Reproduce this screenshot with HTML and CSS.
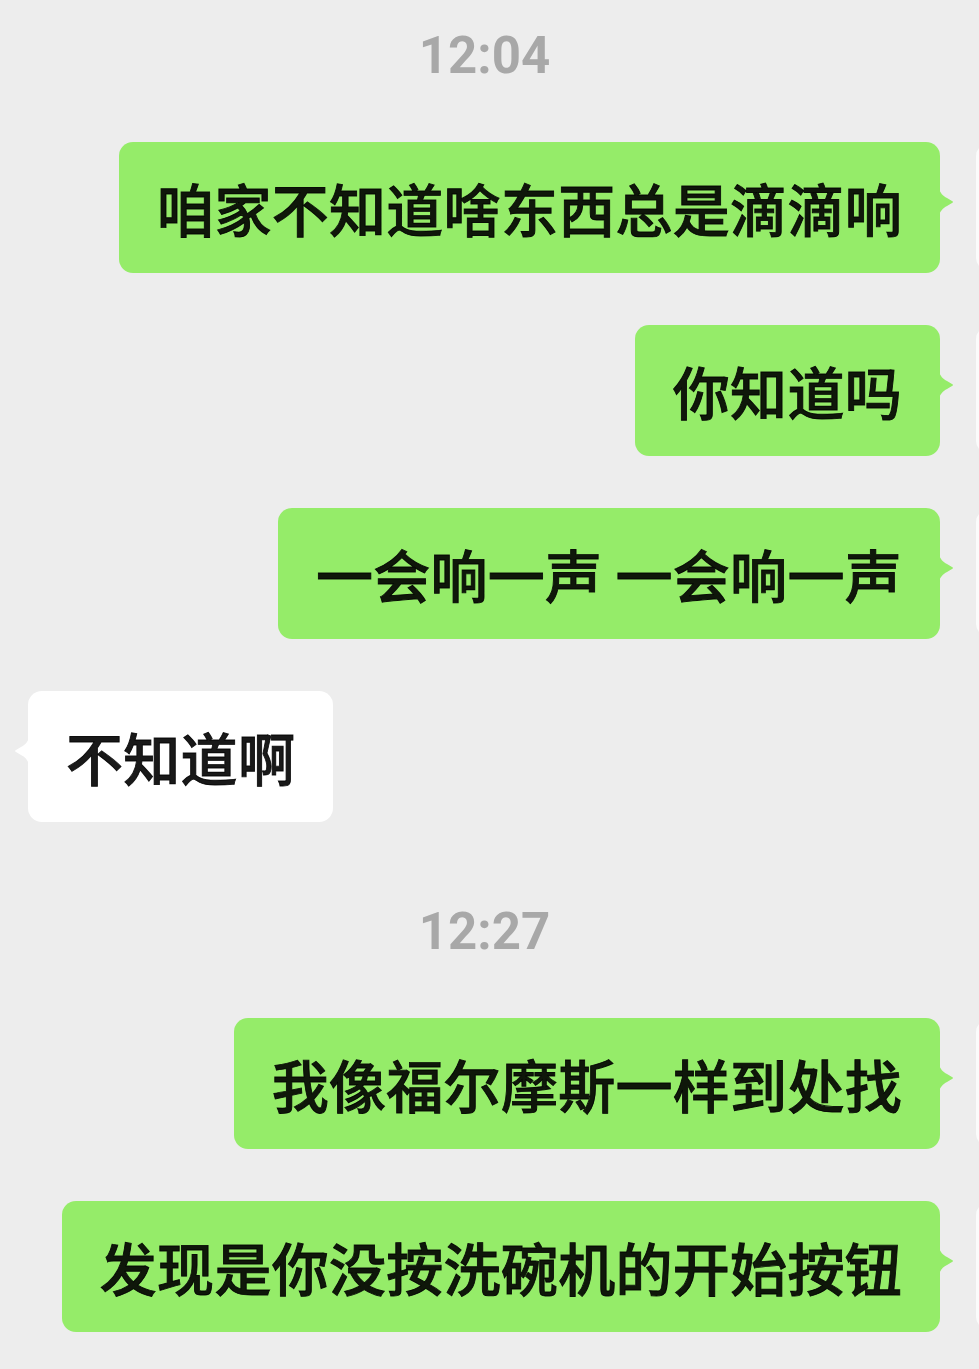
FILE: index.html
```html
<!DOCTYPE html>
<html lang="zh-CN">
<head>
<meta charset="utf-8">
<title>Chat</title>
<link rel="stylesheet" href="styles.css">
</head>
<body>
<main class="chat">
  <div class="time">12:04</div>

  <div class="row row-out">
    <div class="bubble bubble-out">咱家不知道啥东西总是滴滴响</div>
    <div class="avatar"></div>
  </div>

  <div class="row row-out">
    <div class="bubble bubble-out">你知道吗</div>
    <div class="avatar"></div>
  </div>

  <div class="row row-out">
    <div class="bubble bubble-out">一会响一声 一会响一声</div>
    <div class="avatar"></div>
  </div>

  <div class="row row-in">
    <div class="avatar"></div>
    <div class="bubble bubble-in">不知道啊</div>
  </div>

  <div class="time time-later">12:27</div>

  <div class="row row-out">
    <div class="bubble bubble-out">我像福尔摩斯一样到处找</div>
    <div class="avatar"></div>
  </div>

  <div class="row row-out">
    <div class="bubble bubble-out">发现是你没按洗碗机的开始按钮</div>
    <div class="avatar"></div>
  </div>
</main>
</body>
</html>
```

FILE: styles.css
```css
html, body {
  margin: 0;
  padding: 0;
  background: #ededed;
}

body {
  width: 979px;
  height: 1369px;
  overflow: hidden;
}

.chat {
  display: flex;
  flex-direction: column;
  gap: 52px;
  padding-top: 26px;
  overflow: hidden;
}

.time {
  font-family: Roboto, "Liberation Sans", sans-serif;
  font-weight: 700;
  font-size: 51px;
  line-height: 60px;
  color: #a8a8a8;
  text-align: center;
  padding-right: 10px;
  margin-bottom: 4px;
}

.time-later {
  margin-top: 28px;
}

.row {
  display: flex;
  align-items: flex-start;
  gap: 36px;
}

.row-out {
  justify-content: flex-end;
  padding-right: 39px;
}

.row-out .avatar {
  margin-right: -166px;
}

.row-in {
  justify-content: flex-start;
}

.row-in .avatar {
  margin-left: -138px;
}

.avatar {
  flex-shrink: 0;
  width: 130px;
  height: 126px;
  margin-top: 2px;
  border-radius: 12px;
  background: #fbfbfb;
}

.bubble {
  position: relative;
  font-family: "Noto Sans CJK SC", sans-serif;
  font-weight: 500;
  -webkit-text-stroke: 0.9px rgba(0, 0, 0, 0.9);
  font-size: 57px;
  letter-spacing: 0.3px;
  line-height: 75px;
  padding: 28px 38px;
  border-radius: 14px;
  color: rgba(0, 0, 0, 0.9);
  white-space: pre;
}

.bubble-out {
  background: #95ec69;
}

.bubble-in {
  background: #ffffff;
}

.bubble::after {
  content: "";
  position: absolute;
  top: 46px;
  width: 15px;
  height: 28px;
}

.bubble-out::after {
  right: -14px;
  background: #95ec69;
  clip-path: path("M0 0 C1 5 4 8 8 10 L13 13 Q15 14 13 15 L8 18 C4 20 1 23 0 28 Z");
}

.bubble-in::after {
  left: -14px;
  background: #ffffff;
  clip-path: path("M15 0 C14 5 11 8 7 10 L2 13 Q0 14 2 15 L7 18 C11 20 14 23 15 28 Z");
}
```
